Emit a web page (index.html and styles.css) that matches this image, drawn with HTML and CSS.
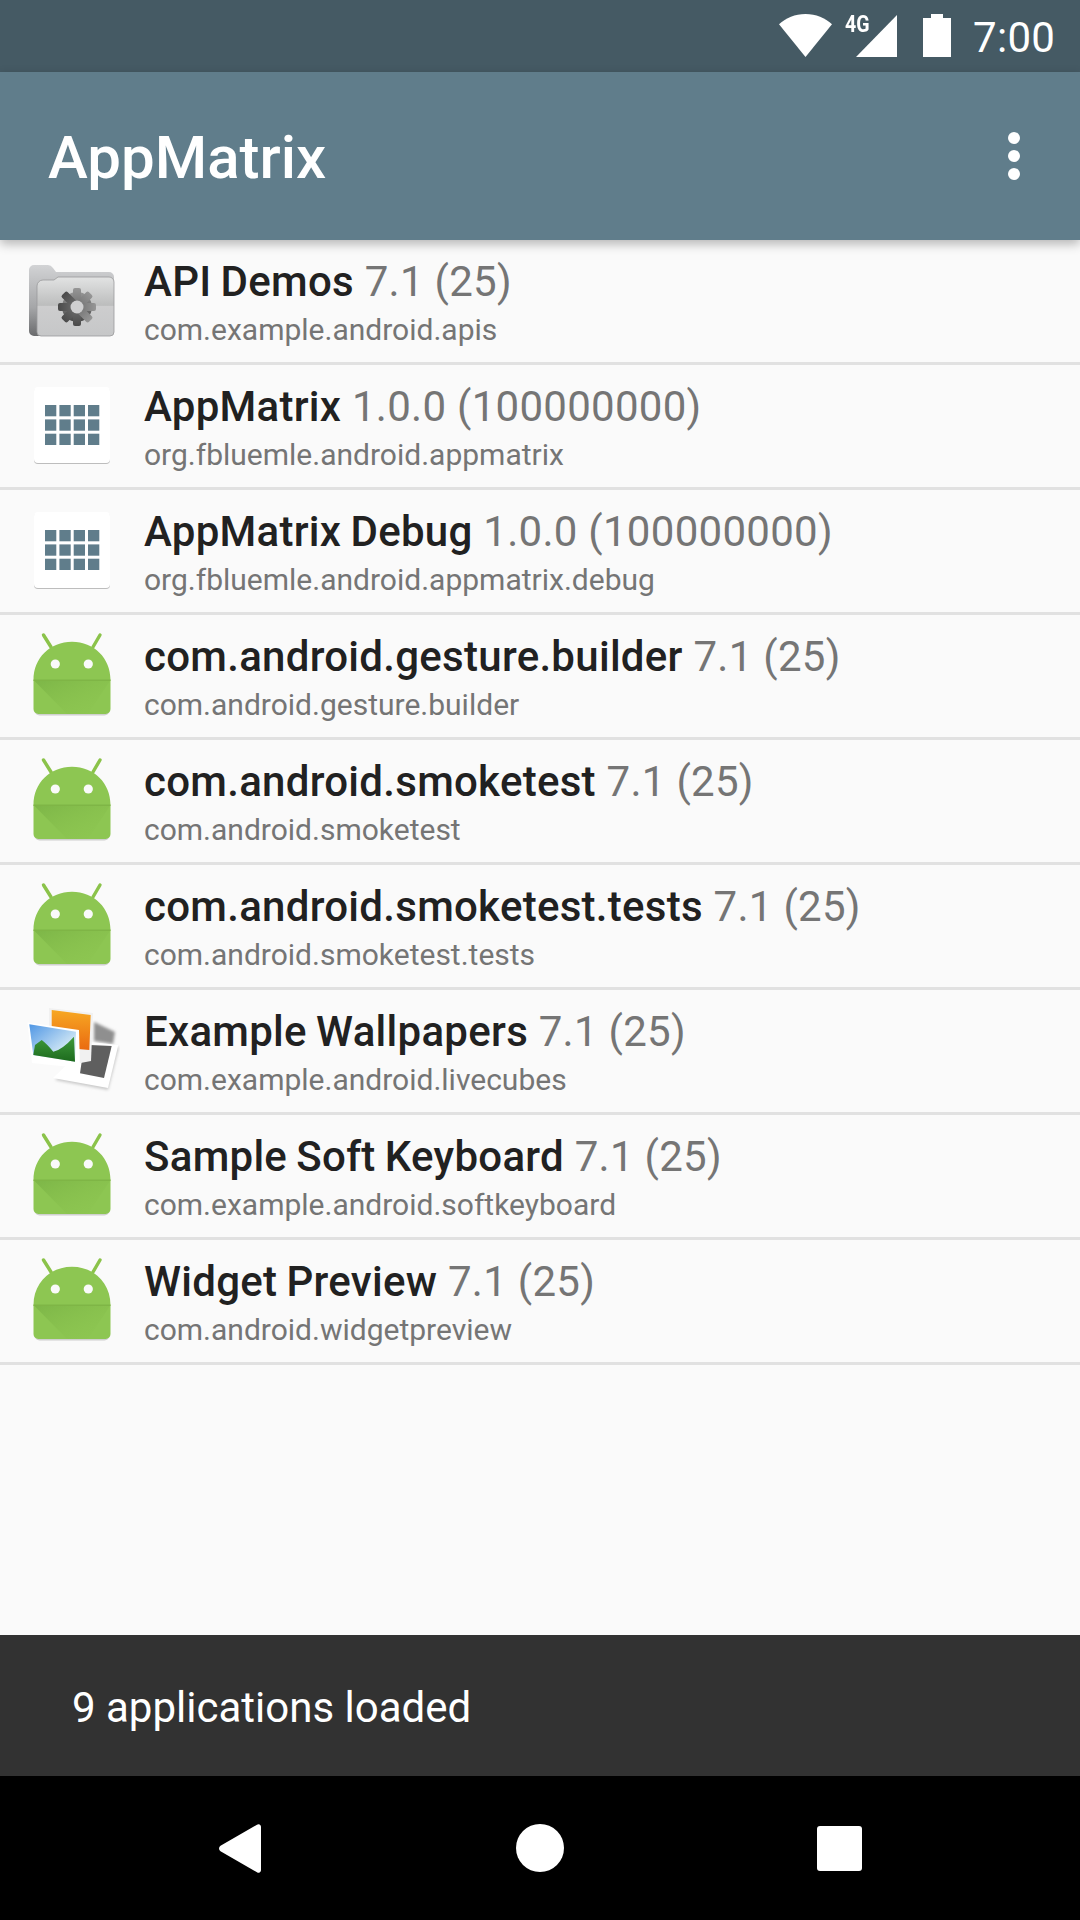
FILE: index.html
```html
<!DOCTYPE html>
<html lang="en">
<head>
<meta charset="utf-8">
<title>AppMatrix</title>
<link rel="stylesheet" href="styles.css">
</head>
<body>
<svg class="defs" width="0" height="0" aria-hidden="true">
  <defs>
    <linearGradient id="folderBack" x1="0" y1="0" x2="0" y2="1"><stop offset="0" stop-color="#d2d3d5"/><stop offset=".6" stop-color="#a5a6a8"/><stop offset="1" stop-color="#6a6b6d"/></linearGradient>
    <linearGradient id="folderFront" x1="0" y1="0" x2="0" y2="1"><stop offset="0" stop-color="#e2e3e3"/><stop offset=".48" stop-color="#bcbdbd"/><stop offset=".5" stop-color="#cdcdce"/><stop offset="1" stop-color="#c6c7c8"/></linearGradient>
    <linearGradient id="gear" x1="0" y1="0" x2="0" y2="1"><stop offset="0" stop-color="#969696"/><stop offset="1" stop-color="#4a4a4a"/></linearGradient>
    <linearGradient id="orange" x1="0" y1="0" x2="0" y2="1"><stop offset="0" stop-color="#f7a823"/><stop offset="1" stop-color="#ea6a10"/></linearGradient>
    <linearGradient id="sky" x1="0" y1="0" x2="1" y2="1"><stop offset="0" stop-color="#4f96e4"/><stop offset=".7" stop-color="#cfe6f5"/></linearGradient>
    <linearGradient id="hill" x1="0" y1="0" x2="0" y2="1"><stop offset="0" stop-color="#3f9a3c"/><stop offset="1" stop-color="#1d6a1d"/></linearGradient>
    <linearGradient id="fold" x1="0" y1="0" x2="1" y2="1"><stop offset="0" stop-color="#6fa83f" stop-opacity=".55"/><stop offset="1" stop-color="#8bc34a" stop-opacity="0"/></linearGradient>
    <filter id="soft" x="-20%" y="-20%" width="140%" height="140%"><feGaussianBlur stdDeviation="1.600"/></filter>
    <filter id="softer" x="-20%" y="-20%" width="140%" height="140%"><feGaussianBlur stdDeviation=".7"/></filter>
    <symbol id="android" viewBox="0 0 96 96">
      <path d="M19.500 7 27 19M76 7l-7 12" stroke="#8bc34a" stroke-width="3.400" stroke-linecap="round" fill="none"/>
      <path d="M10.500 53.500C10.500 30 26 14.700 48 14.700S85.500 30 85.500 53.500V82.500a5 5 0 0 1-5 5H15.500a5 5 0 0 1-5-5Z" fill="#d0d0d0" filter="url(#softer)"/>
      <path d="M9.500 52C9.500 30 26 13.700 48 13.700S86.500 30 86.500 52V81a5 5 0 0 1-5 5H14.500a5 5 0 0 1-5-5Z" fill="#8dc652"/>
      <path d="M9.500 52H86.500L64 86H43Z" fill="url(#fold)"/>
      <path d="M9.500 51.500H86.500V53H9.500Z" fill="#7fb546"/>
      <circle cx="31.300" cy="36" r="4.600" fill="#fafafa"/>
      <circle cx="64.300" cy="36" r="4.600" fill="#fafafa"/>
    </symbol>
    <symbol id="grid" viewBox="0 0 96 96">
      <rect x="10" y="10" width="76" height="76" rx="4" fill="#bdbdbd" filter="url(#softer)"/>
      <rect x="10" y="9" width="76" height="76" rx="4" fill="#fff"/>
      <g fill="#607d8b">
        <rect x="21" y="27" width="11.300" height="11.300"/><rect x="35.400" y="27" width="11.300" height="11.300"/><rect x="49.700" y="27" width="11.300" height="11.300"/><rect x="64" y="27" width="11.300" height="11.300"/>
        <rect x="21" y="41.400" width="11.300" height="11.300"/><rect x="35.400" y="41.400" width="11.300" height="11.300"/><rect x="49.700" y="41.400" width="11.300" height="11.300"/><rect x="64" y="41.400" width="11.300" height="11.300"/>
        <rect x="21" y="55.700" width="11.300" height="11.300"/><rect x="35.400" y="55.700" width="11.300" height="11.300"/><rect x="49.700" y="55.700" width="11.300" height="11.300"/><rect x="64" y="55.700" width="11.300" height="11.300"/>
      </g>
    </symbol>
  </defs>
</svg>

<div class="screen">
  <header class="status-bar">
    <svg class="ic-wifi" width="53" height="43" viewBox="0 0 53 43"><path d="M26.500 43 0 10.300C7 4 16 0 26.500 0S46 4 53 10.300Z" fill="#fff"/></svg>
    <span class="signal">
      <svg width="52" height="42" viewBox="0 0 52 42"><path d="M52 0V42H11Z" fill="#fff"/></svg>
      <span class="net-label">4G</span>
    </span>
    <svg class="ic-battery" width="28" height="43" viewBox="0 0 28 43"><path d="M8 0H20V4H28V43H0V4H8Z" fill="#fff"/></svg>
    <span class="clock">7:00</span>
  </header>

  <div class="toolbar">
    <h1 class="toolbar-title">AppMatrix</h1>
    <span class="overflow"><i class="dot"></i><i class="dot"></i><i class="dot"></i></span>
  </div>

  <main class="app-list">
    <div class="app-row">
      <svg class="app-icon" viewBox="0 0 96 96">
        <path d="M5 17a5 5 0 0 1 5-5H24q3 0 5 3l3 4H85a5 5 0 0 1 5 5V78a5 5 0 0 1-5 5H10a5 5 0 0 1-5-5Z" fill="url(#folderBack)"/>
        <path d="M13 33a6 6 0 0 1 6-6H30l4-3H85a5 5 0 0 1 5 5V79a4 4 0 0 1-4 4H17a4 4 0 0 1-4-4Z" fill="url(#folderFront)" stroke="#9a9b9c" stroke-width=".8"/>
        <g fill="url(#gear)">
          <circle cx="53" cy="54" r="15"/>
          <rect x="49" y="35" width="8" height="38" rx="2"/>
          <rect x="49" y="35" width="8" height="38" rx="2" transform="rotate(45 53 54)"/>
          <rect x="49" y="35" width="8" height="38" rx="2" transform="rotate(90 53 54)"/>
          <rect x="49" y="35" width="8" height="38" rx="2" transform="rotate(135 53 54)"/>
        </g>
        <circle cx="53" cy="54" r="6.500" fill="#cfcfd0"/>
      </svg>
      <div class="app-text">
        <div class="app-title"><b class="app-name">API Demos</b> 7.1 (25)</div>
        <div class="app-package">com.example.android.apis</div>
      </div>
    </div>
    <div class="app-row">
      <svg class="app-icon" viewBox="0 0 96 96"><use href="#grid"/></svg>
      <div class="app-text">
        <div class="app-title"><b class="app-name">AppMatrix</b> 1.0.0 (100000000)</div>
        <div class="app-package">org.fbluemle.android.appmatrix</div>
      </div>
    </div>
    <div class="app-row">
      <svg class="app-icon" viewBox="0 0 96 96"><use href="#grid"/></svg>
      <div class="app-text">
        <div class="app-title"><b class="app-name">AppMatrix Debug</b> 1.0.0 (100000000)</div>
        <div class="app-package">org.fbluemle.android.appmatrix.debug</div>
      </div>
    </div>
    <div class="app-row">
      <svg class="app-icon" viewBox="0 0 96 96"><use href="#android"/></svg>
      <div class="app-text">
        <div class="app-title"><b class="app-name">com.android.gesture.builder</b> 7.1 (25)</div>
        <div class="app-package">com.android.gesture.builder</div>
      </div>
    </div>
    <div class="app-row">
      <svg class="app-icon" viewBox="0 0 96 96"><use href="#android"/></svg>
      <div class="app-text">
        <div class="app-title"><b class="app-name">com.android.smoketest</b> 7.1 (25)</div>
        <div class="app-package">com.android.smoketest</div>
      </div>
    </div>
    <div class="app-row">
      <svg class="app-icon" viewBox="0 0 96 96"><use href="#android"/></svg>
      <div class="app-text">
        <div class="app-title"><b class="app-name">com.android.smoketest.tests</b> 7.1 (25)</div>
        <div class="app-package">com.android.smoketest.tests</div>
      </div>
    </div>
    <div class="app-row">
      <svg class="app-icon" viewBox="0 0 96 96">
        <path d="M70 19 91 29 89 41 70 38Z" fill="#8f8f8f" filter="url(#soft)"/>
        <path d="M68 41 95 44 84 87 31 77Z" fill="#c8c8c8" filter="url(#soft)"/>
        <path d="M66 39 94.300 42 84 85 29 75Z" fill="#fff" filter="url(#softer)"/>
        <path d="M66 42 87.700 43 80 75 56 70.300 57.700 58.700Z" fill="#5f5f5f"/>
        <path d="M25 5 69 10 67 58 46 62 25 30Z" fill="#f1f1f1" filter="url(#softer)"/>
        <path d="M27.700 7 66.700 12 65.300 47 54 46 53 30 27.700 24Z" fill="url(#orange)"/>
        <path d="M3.500 19.500 55 27 56 65 8 60Z" fill="#fff" filter="url(#softer)"/>
        <path d="M5.300 21.300 52 28.700 51 58.700 9.300 52Z" fill="url(#sky)"/>
        <path d="M9.300 52 11 42 17.700 37Q23 41 29.300 48.700 38 47 50 33.700L51 58.700Z" fill="url(#hill)"/>
      </svg>
      <div class="app-text">
        <div class="app-title"><b class="app-name">Example Wallpapers</b> 7.1 (25)</div>
        <div class="app-package">com.example.android.livecubes</div>
      </div>
    </div>
    <div class="app-row">
      <svg class="app-icon" viewBox="0 0 96 96"><use href="#android"/></svg>
      <div class="app-text">
        <div class="app-title"><b class="app-name">Sample Soft Keyboard</b> 7.1 (25)</div>
        <div class="app-package">com.example.android.softkeyboard</div>
      </div>
    </div>
    <div class="app-row">
      <svg class="app-icon" viewBox="0 0 96 96"><use href="#android"/></svg>
      <div class="app-text">
        <div class="app-title"><b class="app-name">Widget Preview</b> 7.1 (25)</div>
        <div class="app-package">com.android.widgetpreview</div>
      </div>
    </div>
  </main>

  <div class="snackbar">9 applications loaded</div>

  <nav class="nav-bar">
    <svg width="42" height="49" viewBox="0 0 42 49"><path d="M38 .700 1.500 21.800a3.200 3.200 0 0 0 0 5.400L38 48.300a2.500 2.500 0 0 0 4-2V2.700a2.500 2.500 0 0 0-4-2Z" fill="#fff"/></svg>
    <svg width="48" height="48" viewBox="0 0 48 48"><circle cx="24" cy="24" r="24" fill="#fff"/></svg>
    <svg width="45" height="45" viewBox="0 0 45 45"><rect width="45" height="45" rx="3" fill="#fff"/></svg>
  </nav>
</div>
</body>
</html>
```

FILE: styles.css
```css
* { box-sizing: border-box; }
html, body { margin: 0; padding: 0; }
body { font-family: Roboto, "Noto Sans", sans-serif; background: #fafafa; }
.defs { display: block; height: 0; }
.screen { width: 1080px; height: 1920px; display: flex; flex-direction: column; overflow: hidden; background: #fafafa; }

.status-bar { height: 72px; flex: none; background: #455a64; color: #fff; display: flex; align-items: flex-start; padding-left: 779px; }
.ic-wifi { margin-top: 14px; }
.signal { position: relative; width: 52px; height: 42px; margin: 15px 0 0 13px; display: block; }
.signal svg { display: block; }
.net-label { position: absolute; left: 0; top: 0; font-size: 23px; line-height: 20px; font-weight: 700; display: block; width: 30px; transform: scaleX(.85); transform-origin: left top; }
.ic-battery { margin: 14px 0 0 26px; }
.clock { margin-left: 22px; font-size: 42px; line-height: 76px; letter-spacing: .3px; }

.toolbar { height: 168px; flex: none; background: #607d8b; color: #fff; display: flex; align-items: center; justify-content: space-between; padding: 0 60px 0 48px; position: relative; z-index: 2; box-shadow: 0 4px 10px rgba(0,0,0,.28); }
.toolbar-title { margin: 0; padding-top: 3px; font-size: 60px; font-weight: 500; line-height: 80px; }
.overflow { display: flex; flex-direction: column; gap: 6px; }
.dot { display: block; width: 12px; height: 12px; border-radius: 50%; background: #fff; }

.app-list { flex: 1; min-height: 0; }
.app-row { height: 125px; display: flex; align-items: center; padding-left: 24px; border-bottom: 3px solid #e1e1e1; }
.app-icon { width: 96px; height: 96px; flex: none; }
.app-text { margin-left: 24px; padding-top: 7px; display: flex; flex-direction: column; min-width: 0; }
.app-title { font-size: 42px; line-height: 50px; margin-bottom: 1px; color: #757575; white-space: nowrap; letter-spacing: .28px; }
.app-name { font-weight: 500; color: #212121; word-spacing: -1.5px; }
.app-package { font-size: 30px; line-height: 44px; color: #757575; white-space: nowrap; }

.snackbar { height: 141px; flex: none; background: #323232; color: #fff; display: flex; align-items: center; padding: 4px 0 0 72px; font-size: 42px; }
.nav-bar { height: 144px; flex: none; background: #000; display: grid; grid-template-columns: 219px 42px 255px 48px 253px 45px; align-items: center; }
.nav-bar svg:nth-child(1) { grid-column: 2; }
.nav-bar svg:nth-child(2) { grid-column: 4; }
.nav-bar svg:nth-child(3) { grid-column: 6; }
```
